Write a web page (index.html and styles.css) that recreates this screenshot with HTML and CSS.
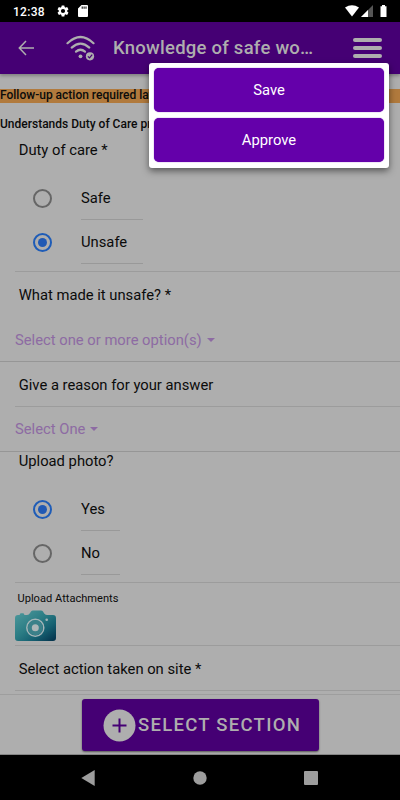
FILE: index.html
```html
<!DOCTYPE html>
<html lang="en">
<head>
<meta charset="utf-8">
<title>Knowledge of safe work</title>
<link rel="stylesheet" href="styles.css">
</head>
<body>
<div class="phone">
  <div class="status">
    <span class="time">12:38</span>
    <svg class="gear" width="14" height="14" viewBox="0 0 24 24"><path fill="#fff" d="M19.14 12.94a7.5 7.5 0 0 0 0-1.88l2.03-1.58a.5.5 0 0 0 .12-.61l-1.92-3.32a.5.5 0 0 0-.59-.22l-2.39.96a7 7 0 0 0-1.62-.94l-.36-2.54A.5.5 0 0 0 13.920 2.400h-3.840a.5.5 0 0 0-.47.410l-.36 2.540a7 7 0 0 0-1.620.940l-2.390-.960a.5.5 0 0 0-.590.220L2.740 8.870a.5.5 0 0 0 .120.610l2.030 1.580a7.500 7.500 0 0 0 0 1.880l-2.030 1.580a.5.5 0 0 0-.120.610l1.920 3.320c.120.220.370.290.590.220l2.390-.960a7 7 0 0 0 1.620.940l.360 2.540c.050.240.240.410.480.410h3.840c.240 0 .440-.170.470-.410l.360-2.540a7 7 0 0 0 1.620-.940l2.390.960c.220.080.470 0 .590-.220l1.920-3.320a.5.5 0 0 0-.120-.610zM12 15.600a3.600 3.600 0 1 1 0-7.200 3.600 3.600 0 0 1 0 7.200z"/></svg>
    <svg class="sd" width="10" height="12" viewBox="0 0 10 12"><path fill="#fff" fill-rule="evenodd" d="M3.500 0H9q1 0 1 1v10q0 1-1 1H1q-1 0-1-1V3.500zM3.700 1.600v2.200h1V1.600zm1.900 0v2.200h1V1.600zm1.900 0v2.200h1V1.600z"/></svg>
    <svg class="signals" width="42" height="13" viewBox="0 0 42 13"><path fill="#fff" d="M0 2.600Q7-2.200 14 2.600L7 11.500z"/><path fill="#555" d="M28 0v12H16z"/><path fill="#fff" d="M23 5v7h-7z"/><path fill="#fff" d="M37 0h3v1.200h1.500V12h-6V1.200H37z"/></svg>
  </div>
  <header class="bar">
    <svg class="back" width="17" height="16" viewBox="0 0 17 16"><path d="M8 1 1.300 8 8 15M1.300 8H16" fill="none" stroke="#aeaeae" stroke-width="1.500"/></svg>
    <svg class="wifi" width="30" height="26" viewBox="0 0 30 26"><g fill="none" stroke="#aeaeae" stroke-width="2.200" stroke-linecap="round"><path d="M1.500 8.200Q14.500-4.200 27.500 8.200"/><path d="M5.700 12.600Q14.500 4.500 23.300 12.600"/><path d="M10 16.700Q14.500 12.800 19 16.700"/></g><circle cx="14.500" cy="21.300" r="1.900" fill="#aeaeae"/><circle cx="24" cy="21.300" r="4.100" fill="#aeaeae"/><path d="m21.900 21.300 1.600 1.600 2.700-3.300" fill="none" stroke="#450074" stroke-width="1.200"/></svg>
    <h1>Knowledge of safe wo…</h1>
    <div class="burger"><i></i><i></i><i></i></div>
  </header>
  <main>
    <div class="notice">Follow-up action required later</div>
    <div class="topic">Understands Duty of Care principles</div>
    <section class="question inset duty">
      <div class="label">Duty of care *</div>
      <div class="options">
        <div class="option"><span class="radio"></span><span class="choice wide">Safe</span></div>
        <div class="option"><span class="radio on"></span><span class="choice wide">Unsafe</span></div>
      </div>
    </section>
    <section class="unsafe">
      <div class="label">What made it unsafe? *</div>
      <div class="select"><span>Select one or more option(s)</span><b></b></div>
    </section>
    <div class="label inset reason">Give a reason for your answer</div>
    <div class="select one"><span>Select One</span><b></b></div>
    <section class="question inset photo">
      <div class="label">Upload photo?</div>
      <div class="options">
        <div class="option"><span class="radio on"></span><span class="choice">Yes</span></div>
        <div class="option"><span class="radio"></span><span class="choice">No</span></div>
      </div>
    </section>
    <section class="inset attach">
      <div class="caption">Upload Attachments</div>
      <svg class="camera" width="42" height="32" viewBox="0 0 42 32"><defs><linearGradient id="lens" x1="0" y1="0" x2="1" y2="1"><stop offset="0" stop-color="#509b9e"/><stop offset=".45" stop-color="#2b7c84"/><stop offset=".7" stop-color="#155f70"/><stop offset="1" stop-color="#032f49"/></linearGradient></defs><path fill="url(#lens)" d="M3 5h1.500l1-1.700h3L9.500 5h2.500Q14 5 15 3l1-1.500Q16.700.4 18 .4h8q1.300 0 2 1.200l1 1.600Q30 5 32 5h6q3 0 3 3v20q0 3-3 3H3q-3 0-3-3V8q0-3 3-3z"/><circle cx="20.300" cy="17.700" r="8.500" fill="none" stroke="#a5b5b8" stroke-width="1.500"/><circle cx="20.300" cy="17.700" r="5.500" fill="#aeb6b8" stroke="#3b8089" stroke-width="4"/><circle cx="31.700" cy="9.700" r="1.300" fill="#a5b5b8"/></svg>
    </section>
    <div class="label inset action">Select action taken on site *</div>
  </main>
  <footer>
    <div class="section-button">
      <svg width="33" height="33" viewBox="0 0 33 33"><circle cx="16.500" cy="16.500" r="16" fill="#aeaeae"/><path d="M16.500 9.500v14M9.500 16.500h14" stroke="#450074" stroke-width="2"/></svg>
      <span>SELECT SECTION</span>
    </div>
  </footer>
  <nav>
    <svg width="14" height="16" viewBox="0 0 14 16"><path fill="#9d9d9d" d="M13.700 0v16L.3 8z"/></svg>
    <svg width="14" height="14" viewBox="0 0 14 14"><circle cx="7" cy="7" r="6.700" fill="#9d9d9d"/></svg>
    <svg width="14" height="14" viewBox="0 0 14 14"><rect width="14" height="14" rx="1" fill="#9d9d9d"/></svg>
  </nav>
  <div class="menu">
    <div class="item">Save</div>
    <div class="item">Approve</div>
  </div>
</div>
</body>
</html>
```
FILE: styles.css
```css
* { box-sizing: border-box; }
body { margin: 0; font-family: Roboto, sans-serif; color: #0b0b0b; }
svg { display: block; flex: none; }
.phone { position: relative; width: 400px; height: 800px; display: flex; flex-direction: column; overflow: hidden; background: #aeaeae; white-space: nowrap; }
.status { height: 22px; flex: none; display: flex; align-items: center; padding: 0 13px; background: #000; color: #fff; }
.time { width: 43px; font-size: 12px; font-weight: 500; line-height: 22px; letter-spacing: .3px; padding-top: 1px; }
.sd { margin-left: 8px; }
.signals { margin-left: auto; }
.bar { height: 52px; flex: none; display: flex; align-items: center; padding: 0 18px; background: #450074; color: #aeaeae; box-shadow: 0 2px 3px rgba(0,0,0,.25); z-index: 1; }
.wifi { margin-left: 31px; }
h1 { margin: 0 0 0 17px; font-size: 18.500px; font-weight: 500; letter-spacing: .240px; }
.burger { margin-left: auto; display: grid; gap: 4px; }
.burger i { width: 29px; height: 4px; border-radius: 2px; background: #aeaeae; }
main { flex: 1; min-height: 0; padding-top: 15px; font-size: 14.780px; }
.notice { height: 14px; line-height: 13px; background: #b17a3d; font-size: 12px; font-weight: 500; }
.topic { height: 28px; padding-top: 14px; line-height: 14px; font-size: 12px; font-weight: 500; }
.label { padding-left: 3.700px; line-height: 20px; }
.inset { margin-left: 15px; border-bottom: 1px solid #9c9c9c; }
.duty { height: 141px; padding-top: 9px; }
.options { display: grid; grid-auto-rows: 44.400px; padding: 15.500px 0 0 18px; }
.option { display: flex; }
.radio { width: 19px; height: 19px; margin-top: 13px; border: 2px solid #666; border-radius: 50%; display: grid; place-items: center; }
.on { border-color: #1e5cb7; }
.on::after { content: ""; width: 9px; height: 9px; border-radius: 50%; background: #2059b4; }
.choice { width: 39px; height: 44px; margin-left: 29px; line-height: 45px; border-bottom: 1px solid #999; }
.wide { width: 62px; }
.unsafe { height: 90px; padding: 13px 0 0 15px; border-bottom: 1px solid #969696; }
.select { display: flex; align-items: center; gap: 5px; color: #8d6ba3; line-height: 20px; }
.select b { border: 4.500px solid transparent; border-top-color: #8d6ba3; border-bottom: 0; }
.unsafe .label { padding-left: 3.700px; }
.unsafe .select { margin-top: 25px; }
.reason { height: 45px; line-height: 46px; }
.one { height: 45px; padding-left: 15px; border-bottom: 1px solid #969696; }
.photo { height: 131px; }
.photo .label { height: 19px; line-height: 19px; }
.attach { height: 63px; padding-top: 8px; }
.caption { padding-left: 2.500px; font-size: 11.100px; line-height: 16px; }
.camera { margin-top: 3px; }
.action { height: 45px; line-height: 46px; }
footer { height: 61px; flex: none; padding-top: 4px; border-top: 1px solid #9e9e9e; border-bottom: 1px solid #858585; display: flex; justify-content: center; align-items: flex-start; }
.section-button { width: 237px; height: 52px; display: flex; align-items: center; padding-left: 21px; gap: 2.500px; border-radius: 3px; background: #450074; color: #aeaeae; font-size: 18.500px; font-weight: 500; letter-spacing: 1.280px; box-shadow: 0 1px 2px rgba(0,0,0,.5); }
nav { height: 45px; flex: none; display: flex; align-items: center; justify-content: space-between; padding: 0 82px 0 81px; background: #000; }
.menu { position: absolute; z-index: 2; left: 149px; top: 63px; width: 240px; height: 105px; padding: 5px; display: grid; grid-template-rows: 44px 44px; gap: 6px; border-radius: 3px; background: #fff; color: #fff; box-shadow: 0 3px 7px rgba(0,0,0,.5); font-size: 14.780px; }
.item { display: flex; align-items: center; justify-content: center; border-radius: 5px; background: #6400aa; box-shadow: 0 0 1px #6400aa; }
```
